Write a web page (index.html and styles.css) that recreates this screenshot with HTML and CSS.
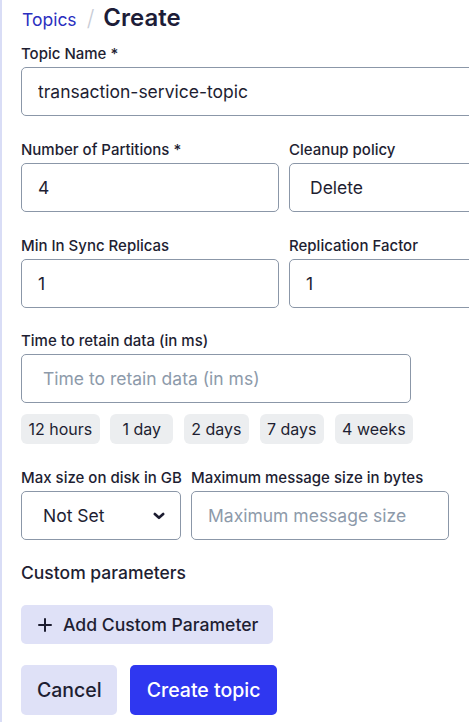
FILE: index.html
```html
<!DOCTYPE html>
<html lang="en">
<head>
<meta charset="utf-8">
<title>Create Topic</title>
<link rel="stylesheet" href="styles.css">
</head>
<body>
<div class="page">
  <div class="crumbs">
    <a class="crumb-link" href="#">Topics</a>
    <span class="crumb-sep">/</span>
    <span class="crumb-current">Create</span>
  </div>

  <form class="form">
    <div class="field">
      <label class="label">Topic Name *</label>
      <input class="input input-name" type="text" value="transaction-service-topic">
    </div>

    <div class="row row-two">
      <div class="field">
        <label class="label">Number of Partitions *</label>
        <input class="input" type="text" value="4">
      </div>
      <div class="field">
        <label class="label">Cleanup policy</label>
        <div class="input select-box select-wide">Delete</div>
      </div>
    </div>

    <div class="row row-two">
      <div class="field">
        <label class="label">Min In Sync Replicas</label>
        <input class="input" type="text" value="1">
      </div>
      <div class="field">
        <label class="label">Replication Factor</label>
        <input class="input" type="text" value="1">
      </div>
    </div>

    <div class="field field-retain">
      <label class="label">Time to retain data (in ms)</label>
      <input class="input input-retain" type="text" placeholder="Time to retain data (in ms)">
      <div class="chips">
        <span class="chip">12 hours</span>
        <span class="chip">1 day</span>
        <span class="chip">2 days</span>
        <span class="chip">7 days</span>
        <span class="chip">4 weeks</span>
      </div>
    </div>

    <div class="row row-size">
      <div class="field">
        <label class="label">Max size on disk in GB</label>
        <div class="input select-box">
          <span>Not Set</span>
          <svg class="chevron" width="12" height="8" viewBox="0 0 12 8"><path d="M1.8 2 L6 5.8 L10.2 2" fill="none" stroke="#1c1c30" stroke-width="2.6" stroke-linecap="round" stroke-linejoin="round"/></svg>
        </div>
      </div>
      <div class="field">
        <label class="label">Maximum message size in bytes</label>
        <input class="input" type="text" placeholder="Maximum message size">
      </div>
    </div>

    <h3 class="section-title">Custom parameters</h3>

    <div class="add-row">
      <button type="button" class="btn btn-soft btn-add">
        <svg class="plus" width="14" height="14" viewBox="0 0 14 14"><path d="M7 1 V13 M1 7 H13" stroke="#1c1c30" stroke-width="2" stroke-linecap="round"/></svg>
        Add Custom Parameter
      </button>
    </div>

    <div class="actions">
      <button type="button" class="btn btn-soft btn-lg">Cancel</button>
      <button type="button" class="btn btn-primary btn-lg">Create topic</button>
    </div>
  </form>
</div>
</body>
</html>
```

FILE: styles.css
```css
html, body {
  margin: 0;
  padding: 0;
  background: #ffffff;
  overflow: hidden;
}

body {
  font-family: Inter, "Noto Sans", sans-serif;
  color: #1e1e32;
  border-left: 2px solid #d9ddf6;
  min-height: 722px;
  box-sizing: border-box;
}

.page {
  padding-left: 19px;
  width: 527px;
}

.crumbs {
  display: flex;
  align-items: baseline;
  height: 32px;
  padding-top: 3px;
  margin-bottom: 9px;
}

.crumb-link {
  font-size: 17.5px;
  color: #2b2fc0;
  text-decoration: none;
  margin-left: 1px;
}

.crumb-sep {
  font-size: 22px;
  color: #c8ccd6;
  margin: 0 9px 0 10px;
  font-weight: 300;
}

.crumb-current {
  font-size: 24px;
  font-weight: 600;
  color: #1d1d38;
}

.form {
  display: flex;
  flex-direction: column;
  gap: 24px;
}

.field {
  display: flex;
  flex-direction: column;
}

.label {
  font-size: 15px;
  font-weight: 500;
  line-height: 20px;
  margin-bottom: 3px;
  color: #1e1e32;
  white-space: nowrap;
}

.input {
  box-sizing: border-box;
  height: 49px;
  width: 100%;
  border: 1px solid #8b97a8;
  border-radius: 5px;
  padding: 0 16px;
  font-family: Inter, "Noto Sans", sans-serif;
  font-size: 17.5px;
  color: #1e1e32;
  background: #fff;
  outline: none;
}

.input::placeholder {
  color: #8d9aaa;
}

.row {
  display: grid;
  column-gap: 10px;
}

.row-two {
  grid-template-columns: 258px 258px;
}

.row-size {
  grid-template-columns: 160px 258px;
}

.select-box {
  display: flex;
  align-items: center;
  justify-content: space-between;
  padding: 0 15px 0 21px;
}

.select-wide {
  padding-left: 20px;
}

.chevron {
  display: block;
}

.field-retain {
  margin-top: -1px;
}

.input-retain {
  width: 390px;
  padding-left: 21px;
}

.chips {
  display: flex;
  gap: 10.5px;
  margin-top: 11px;
}

.chip {
  box-sizing: border-box;
  height: 30px;
  min-width: 63px;
  padding: 0 7.5px;
  display: inline-flex;
  align-items: center;
  justify-content: center;
  background: #eceef0;
  border-radius: 6px;
  font-size: 16px;
  color: #1e1e32;
}

.section-title {
  margin: -3px 0 -4px;
  font-size: 17.5px;
  font-weight: 500;
  line-height: 24px;
  color: #1e1e32;
}

.add-row {
  display: flex;
}

.btn {
  font-family: Inter, "Noto Sans", sans-serif;
  border: none;
  border-radius: 5px;
  cursor: pointer;
  display: inline-flex;
  align-items: center;
  color: #1e1e32;
  font-weight: 500;
}

.btn-soft {
  background: #dfe1f7;
}

.btn-add {
  height: 39px;
  padding: 0 15px 0 17px;
  font-size: 17.6px;
  gap: 11px;
}

.plus {
  display: block;
}

.actions {
  display: flex;
  gap: 13px;
  margin-top: -3px;
}

.btn-lg {
  height: 50px;
  padding: 0 15px 0 16px;
  font-size: 19.5px;
}

.btn-primary {
  background: #2f37f0;
  color: #ffffff;
  padding: 0 17px 0 17px;
}
```
